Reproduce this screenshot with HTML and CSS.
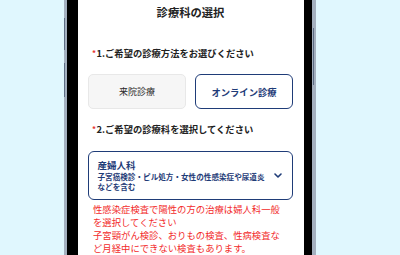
FILE: index.html
```html
<!DOCTYPE html>
<html lang="ja">
<head>
<meta charset="utf-8">
<title>診療科の選択</title>
<link rel="stylesheet" href="styles.css">
</head>
<body>
<div class="stage">
  <div class="phone">
    <span class="key key-vol-up"></span>
    <span class="key key-vol-down"></span>
    <span class="key key-power"></span>
    <div class="screen">
      <h1 class="title">診療科の選択</h1>
      <p class="label label-first"><span class="req">*</span>1.ご希望の診療方法をお選びください</p>
      <div class="choices">
        <button class="choice">来院診療</button>
        <button class="choice is-active">オンライン診療</button>
      </div>
      <p class="label label-second"><span class="req">*</span>2.ご希望の診療科を選択してください</p>
      <div class="select">
        <div class="select-text">
          <div class="select-name">産婦人科</div>
          <div class="select-sub">子宮癌検診・ピル処方・女性の性感染症や尿道炎などを含む</div>
        </div>
        <svg class="chevron" width="8" height="5" viewBox="0 0 8 5"><path d="M1 1 L4 4 L7 1" fill="none" stroke="#1f3c78" stroke-width="1.6" stroke-linecap="round" stroke-linejoin="round"/></svg>
      </div>
      <div class="note">
        <p>性感染症検査で陽性の方の治療は婦人科一般を選択してください</p>
        <p>子宮頸がん検診、おりもの検査、性病検査など月経中にできない検査もあります。</p>
      </div>
    </div>
  </div>
</div>
</body>
</html>
```
FILE: styles.css
```css
html, body {
  margin: 0;
  padding: 0;
}
body {
  background: #e0f7fe;
  height: 255px;
  overflow: hidden;
  font-family: "Noto Sans CJK JP", "Noto Sans", sans-serif;
}
.stage {
  padding-left: 64px;
  height: 255px;
}
.phone {
  position: relative;
  box-sizing: border-box;
  width: 252px;
  height: 255px;
  background: #000;
  border-left: 3px solid #a4b0bf;
  border-right: 4px solid #a4b0bf;
  padding-left: 11px;
  padding-right: 8px;
}
.key {
  position: absolute;
  width: 1px;
  background: #5d6d84;
}
.key-vol-up {
  left: -3px;
  top: 18px;
  height: 32px;
}
.key-vol-down {
  left: -3px;
  top: 63px;
  height: 34px;
}
.key-power {
  right: -2px;
  top: 28px;
  height: 57px;
}
.screen {
  background: #fff;
  height: 255px;
  box-sizing: border-box;
  padding: 0 11px 0 10px;
  overflow: hidden;
  color: #222;
}
.title {
  margin: 5px 0 0;
  font-size: 11.3px;
  line-height: 15px;
  font-weight: 700;
  text-align: center;
  color: #222;
}
.label {
  margin: 0;
  padding-left: 4px;
  font-size: 9.3px;
  line-height: 13px;
  font-weight: 700;
  color: #222;
  white-space: nowrap;
}
.label-first {
  margin-top: 27px;
}
.label-second {
  margin-top: 13.5px;
}
.req {
  color: #e8312c;
  font-size: 8px;
  margin-right: 0.5px;
  position: relative;
  top: -1px;
}
.choices {
  margin-top: 14px;
  display: grid;
  grid-template-columns: 1fr 1fr;
  gap: 9px;
}
.choice {
  height: 35px;
  box-sizing: border-box;
  font-family: inherit;
  background: #f6f6f6;
  border: 1px solid #e8e8e8;
  border-radius: 5px;
  font-size: 9px;
  color: #2a2a2a;
  padding: 0;
}
.choice.is-active {
  background: #fff;
  border: 1.5px solid #1f3c78;
  border-radius: 6px;
  color: #1f3c78;
  font-weight: 700;
  font-size: 9.3px;
}
.select {
  margin-top: 15.5px;
  display: flex;
  align-items: center;
  border: 1.5px solid #1f3c78;
  border-radius: 6px;
  padding: 6.5px 10px 7.5px 8.5px;
  color: #1f3c78;
}
.select-text {
  flex: 1;
  min-width: 0;
}
.select-name {
  font-size: 9.5px;
  line-height: 13px;
  font-weight: 700;
}
.select-sub {
  font-size: 7.6px;
  line-height: 10px;
  font-weight: 700;
}
.chevron {
  flex: none;
  margin-left: 6px;
  display: block;
}
.note {
  margin-top: 2.6px;
  padding: 0 9px 0 5px;
  color: #f22b2b;
  font-size: 9.35px;
  line-height: 13.3px;
}
.note p {
  margin: 0;
}
```
